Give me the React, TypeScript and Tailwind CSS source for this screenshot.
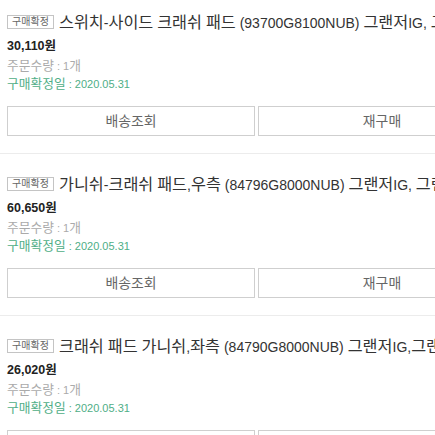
const orders = [
  {
    title: "스위치-사이드 크래쉬 패드 (93700G8100NUB) 그랜저IG, 그랜저IG 하이브리드",
    price: "30,110원",
  },
  {
    title: "가니쉬-크래쉬 패드,우측 (84796G8000NUB) 그랜저IG, 그랜저IG 하이브리드",
    price: "60,650원",
  },
  {
    title: "크래쉬 패드 가니쉬,좌측 (84790G8000NUB) 그랜저IG,그랜저IG 하이브리드",
    price: "26,020원",
  },
];

const font = { fontFamily: '"Liberation Sans", "Noto Sans CJK KR", sans-serif' };

// 원본은 한글이 영문보다 크게 찍혀서 한글 구간만 글자 크기를 키운다
function Ko({ text }: { text: string }) {
  const parts = text.split(/([\uAC00-\uD7A3]+)/);
  return (
    <>
      {parts.map((p, i) =>
        /[\uAC00-\uD7A3]/.test(p) ? (
          <span key={i} className="text-[1.16em]">
            {p}
          </span>
        ) : (
          <span key={i}>{p}</span>
        )
      )}
    </>
  );
}

function OrderItem({ title, price }: { title: string; price: string }) {
  return (
    <div className="border-b border-[#ececec] px-[7px] pt-[20px] pb-[17px] first:pt-[12px]">
      {/* 상품명 */}
      <div className="flex h-[20px] items-center whitespace-nowrap overflow-hidden">
        <span className="flex h-[14px] w-[47px] shrink-0 items-center justify-center border border-[#c4c4c4] text-[10px] leading-none text-[#666]">
          구매확정
        </span>
        <span className="ml-[5px] text-[14px] leading-[20px] text-[#333]">
          <Ko text={title} />
        </span>
      </div>

      <div className="mt-[5px] text-[12.5px] font-bold leading-[18px] text-[#222]">{price}</div>
      <div className="mt-[3px] text-[11px] leading-[16px] text-[#aaa]">
        <Ko text="주문수량 : 1개" />
      </div>
      <div className="mt-[2px] text-[11px] leading-[16px] text-[#4fae86]">
        <Ko text="구매확정일 : 2020.05.31" />
      </div>

      {/* 버튼 */}
      <div className="mt-[14px] flex gap-[3px]">
        <button className="flex h-[30px] w-[248px] items-center justify-center border border-[#cfcfcf] bg-white text-[12px] text-[#666]">
          <Ko text="배송조회" />
        </button>
        <button className="flex h-[30px] w-[248px] items-center justify-center border border-[#cfcfcf] bg-white text-[12px] text-[#666]">
          <Ko text="재구매" />
        </button>
      </div>
    </div>
  );
}

export default function App() {
  return (
    <div className="h-[435px] w-[435px] overflow-hidden bg-white" style={font}>
      <div className="w-[513px]">
        {orders.map((o, i) => (
          <OrderItem key={i} title={o.title} price={o.price} />
        ))}
      </div>
    </div>
  );
}
